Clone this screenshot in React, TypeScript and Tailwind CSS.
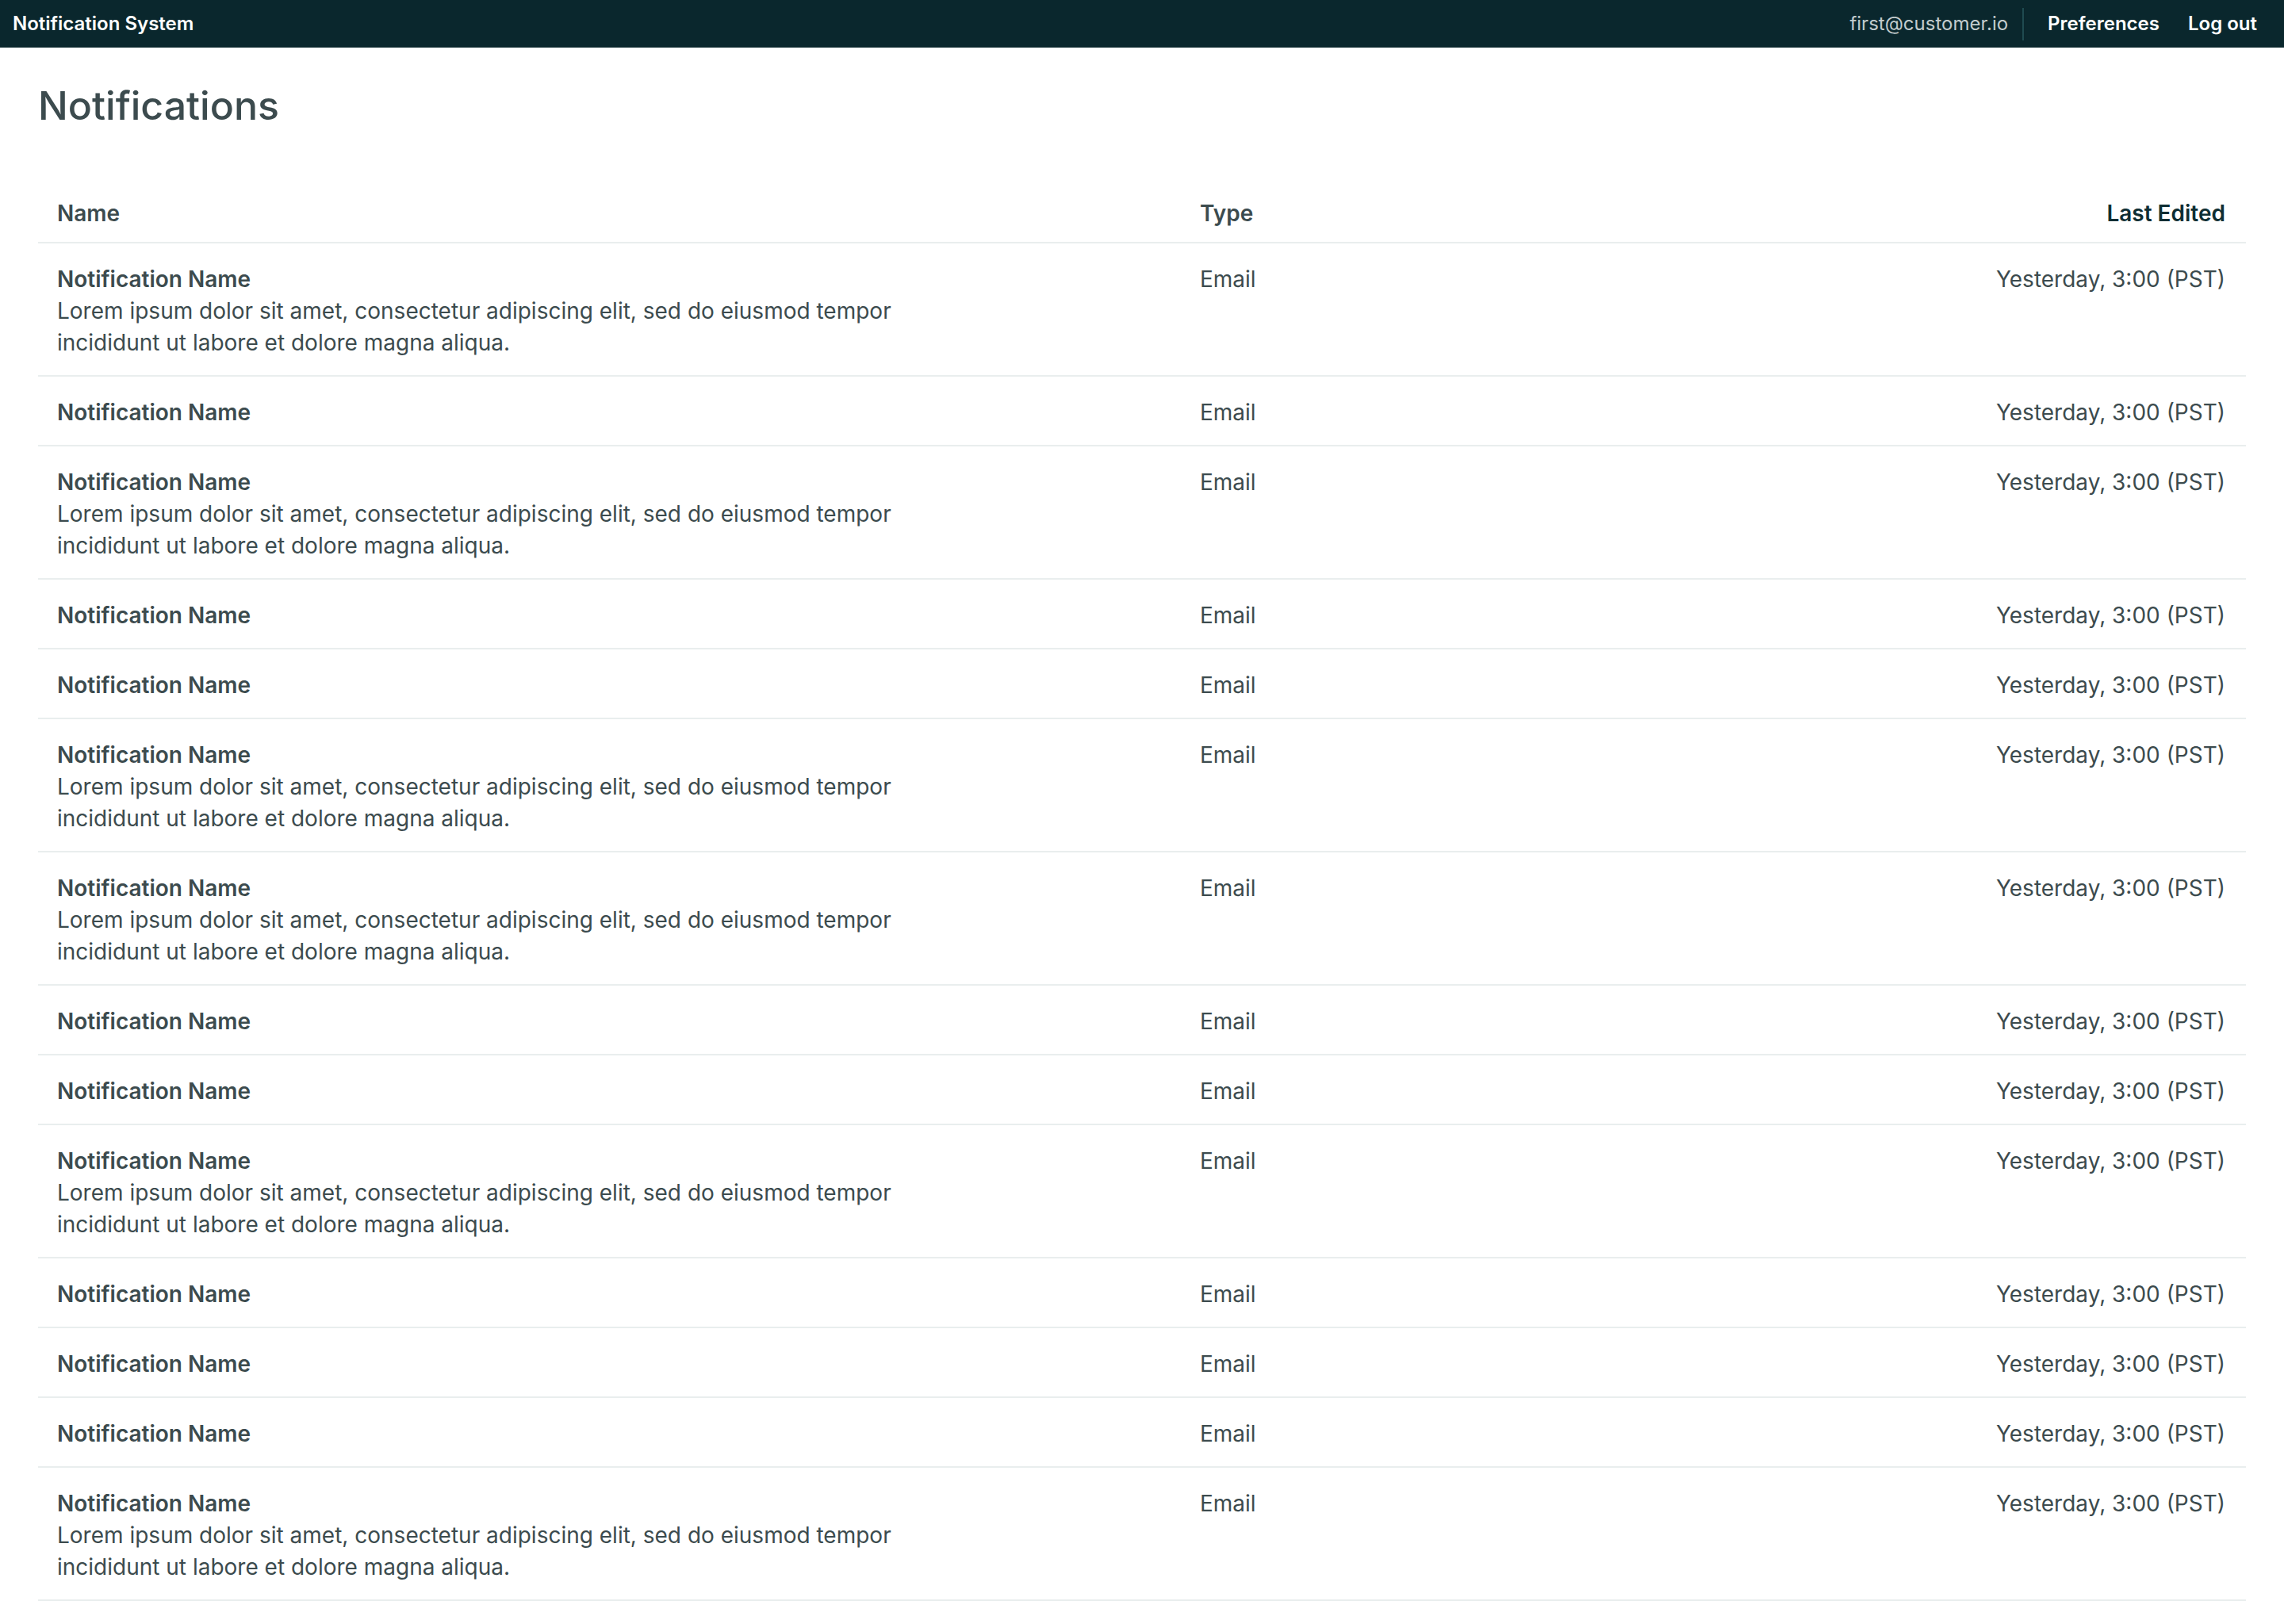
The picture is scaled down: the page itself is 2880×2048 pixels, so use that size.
import React from "react";

type Row = {
    name: string;
    description?: string;
    type: string;
    lastEdited: string;
};

const LOREM = "Lorem ipsum dolor sit amet, consectetur adipiscing elit, sed do eiusmod tempor incididunt ut labore et dolore magna aliqua.";

// long / short pattern as it appears in the list
const pattern = [true, false, true, false, false, true, true, false, false, true, false, false, false, true];

const rows: Row[] = pattern.map((long) => ({
    name: "Notification Name",
    description: long ? LOREM : undefined,
    type: "Email",
    lastEdited: "Yesterday, 3:00 (PST)",
}));

function TopBar() {
    return (
        <header className="h-[60px] bg-[#0a272d] flex items-center justify-between pl-4 pr-4 text-[24px]">
            <span className="font-semibold text-white">Notification System</span>
            <nav className="flex items-center h-full">
                <span className="text-[#c3cccd] pr-[18px] h-[41px] flex items-center border-r-2 border-[#1f4a50]">
                    first@customer.io
                </span>
                <a className="ml-[12px] px-[18px] font-semibold text-white cursor-pointer">Preferences</a>
                <a className="px-[18px] font-semibold text-white cursor-pointer">Log out</a>
            </nav>
        </header>
    );
}

function NotificationTable({items}: {items: Row[]}) {
    return (
        <table className="w-full table-fixed border-collapse mt-[64px] text-[28px] leading-[40px] text-[#3c4b4e]">
            <colgroup>
                <col className="w-[1441px]" />
                <col className="w-[700px]" />
                <col />
            </colgroup>
            <thead>
                <tr className="border-b-2 border-[#e9eeee]">
                    <th className="text-left font-semibold pl-6 pt-[24px] pb-[16px]">Name</th>
                    <th className="text-left font-semibold pl-6 pt-[24px] pb-[16px]">Type</th>
                    <th className="text-right font-semibold text-[#0f2e33] pr-[26px] pt-[24px] pb-[16px]">Last Edited</th>
                </tr>
            </thead>
            <tbody>
                {items.map((row, i) => (
                    <tr key={i} className="border-b-2 border-[#e9eeee] align-top">
                        <td className="pl-6 pt-[25px] pb-[21px]">
                            <div className="font-semibold">{row.name}</div>
                            {row.description && (
                                <p className="max-w-[1120px]">{row.description}</p>
                            )}
                        </td>
                        <td className="pl-6 pt-[25px] pb-[21px]">{row.type}</td>
                        <td className="text-right pr-[26px] pt-[25px] pb-[21px]">{row.lastEdited}</td>
                    </tr>
                ))}
            </tbody>
        </table>
    );
}

export default function App() {
    return (
        <div className="min-h-screen bg-white font-['Inter',_'Noto_Sans',_sans-serif]">
            <TopBar />
            <main className="px-12 pt-[45px]">
                <h1 className="text-[50px] leading-[56px] font-medium text-[#3c4b4e]">Notifications</h1>
                <NotificationTable items={rows} />
            </main>
        </div>
    );
}
